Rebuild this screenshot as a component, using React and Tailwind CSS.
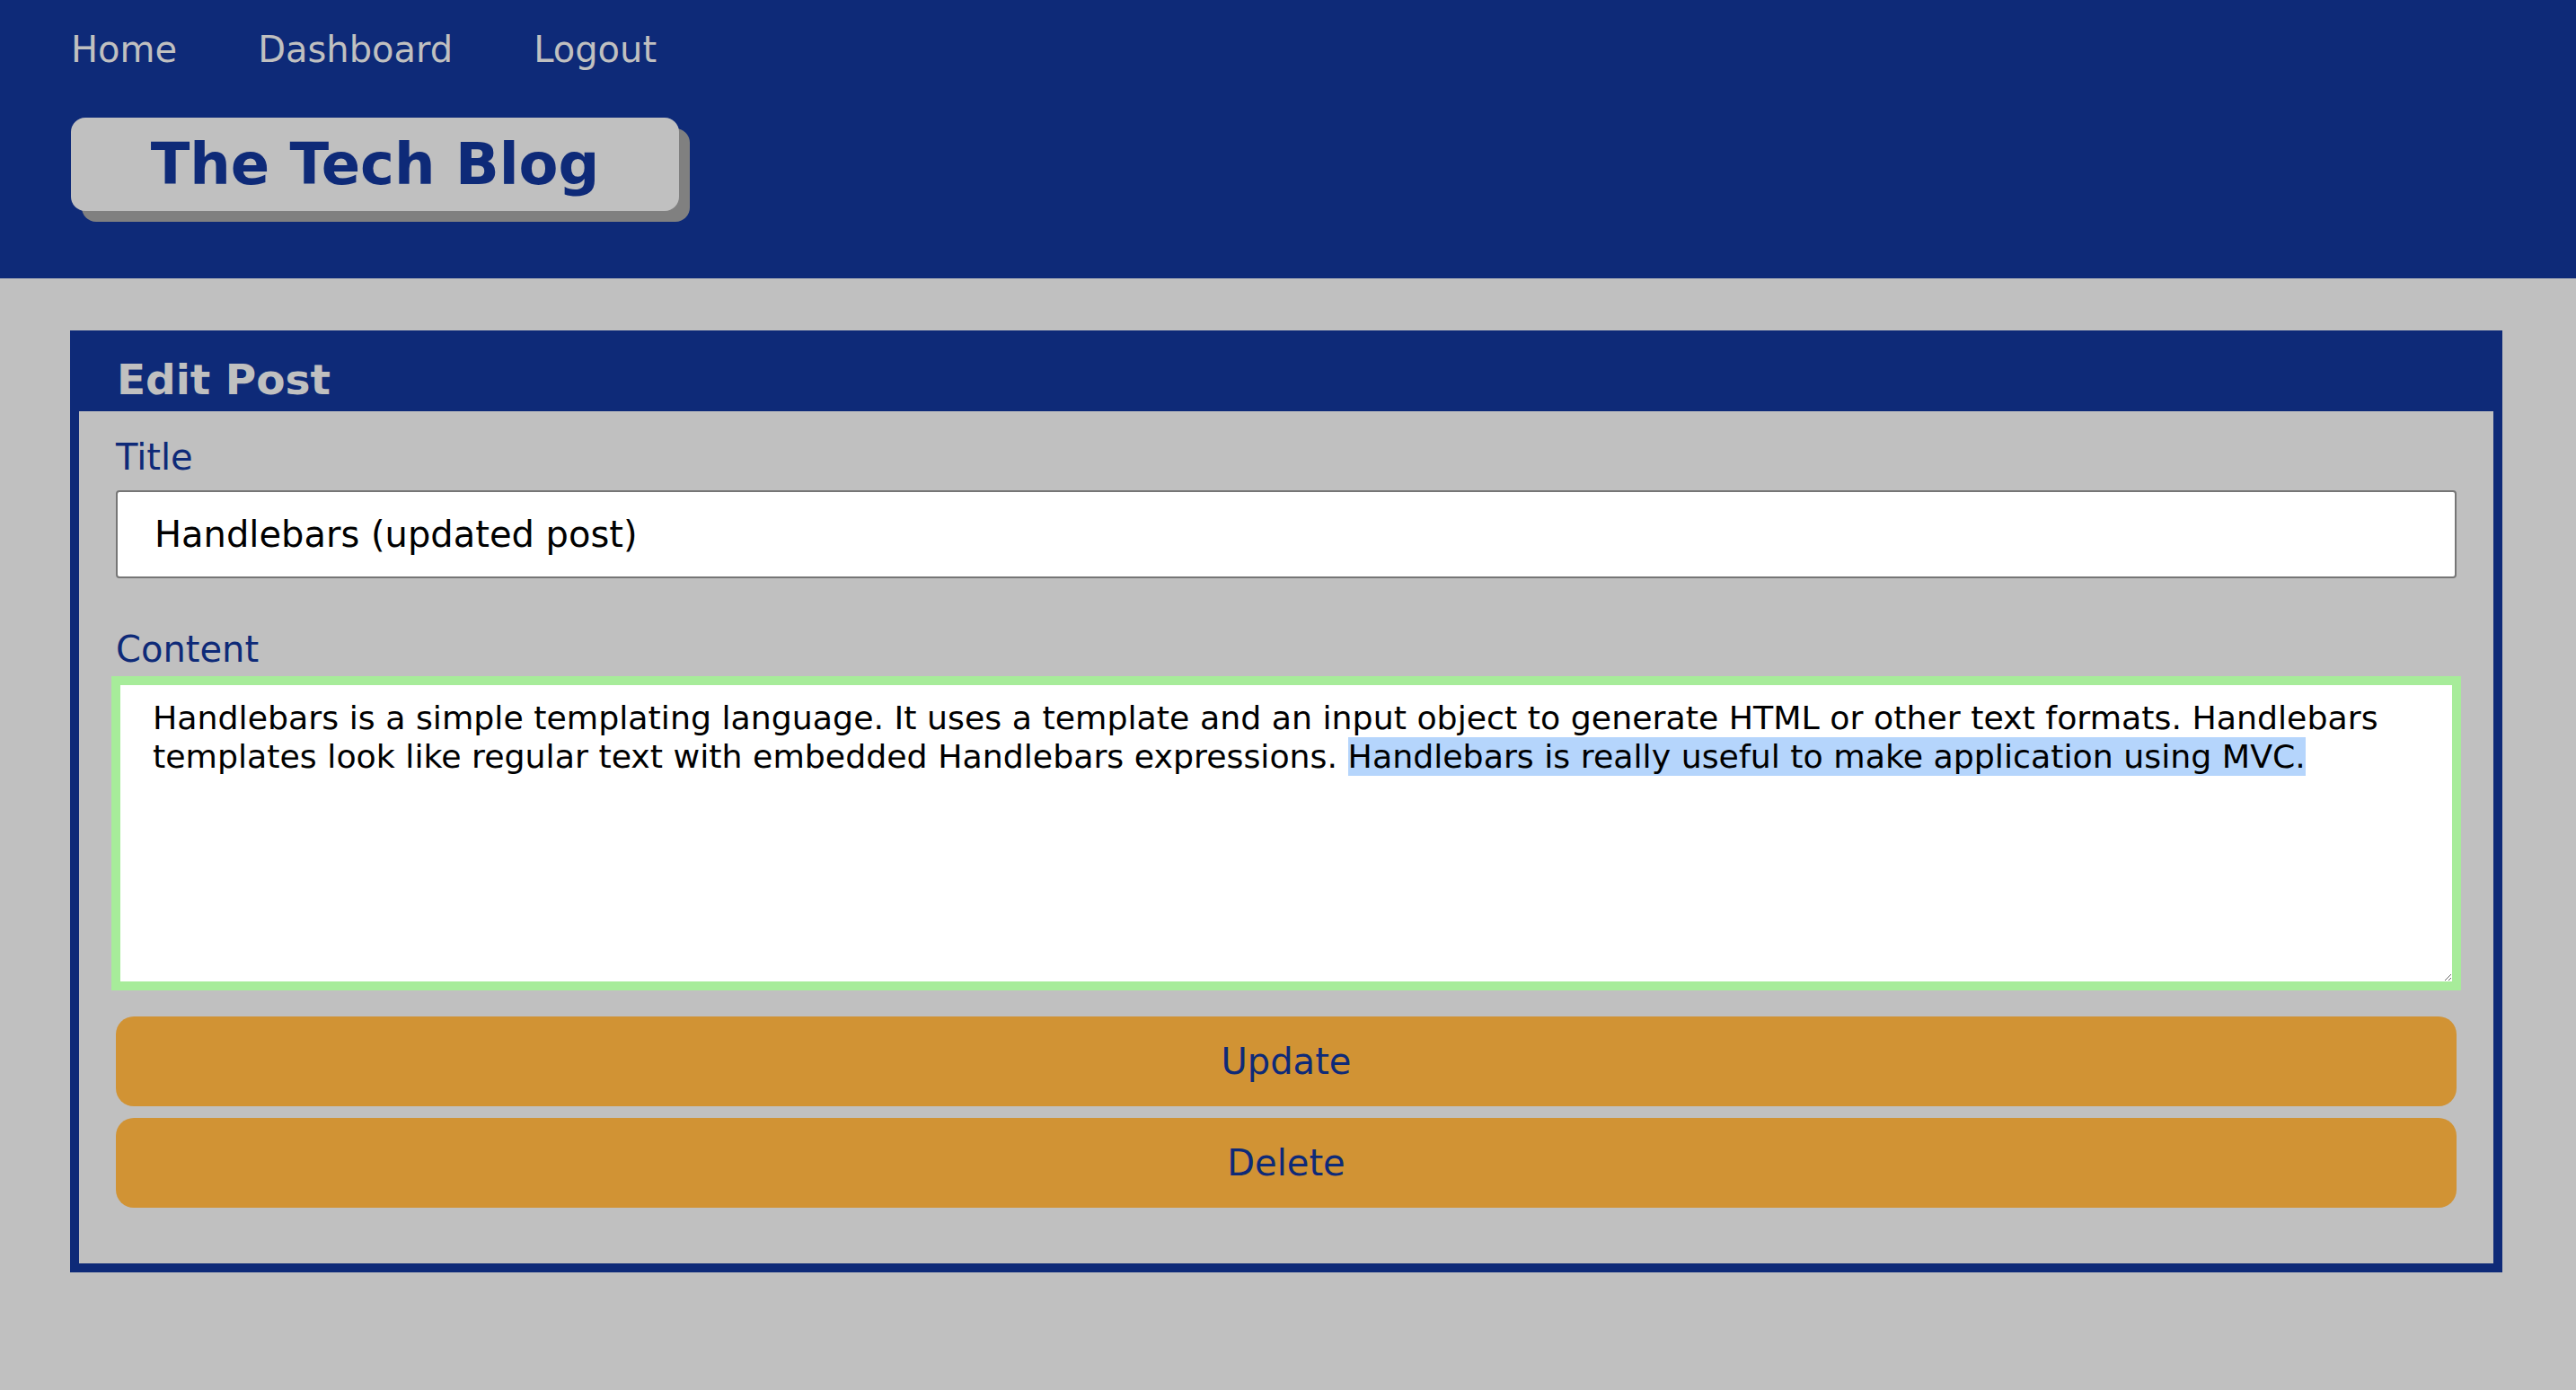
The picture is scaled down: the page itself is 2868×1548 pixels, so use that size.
import React from "react";

const navLinks = ["Home", "Dashboard", "Logout"];

export default function App() {
  return (
    <div className="min-h-screen bg-[#c0c0c0] font-['DejaVu_Sans',sans-serif]">
      {/* Header */}
      <header className="h-[310px] bg-[#0e2a78] pt-[32px] px-[79px]">
        <nav className="flex gap-[90px] text-[40px] text-[#c0c0c0]">
          {navLinks.map((link) => (
            <a key={link} href="#" className="leading-[46px]">
              {link}
            </a>
          ))}
        </nav>
        <div className="mt-[53px] flex h-[104px] w-[677px] items-center justify-center rounded-[16px] bg-[#c0c0c0] shadow-[12px_12px_0_#808080]">
          <h1 className="text-[64px] font-bold leading-none text-[#0e2a78]">
            The Tech Blog
          </h1>
        </div>
      </header>

      {/* Edit Post card */}
      <main className="ml-[78px] mr-[82px] mt-[58px] border-[10px] border-[#0e2a78] bg-[#0e2a78]">
        <h2 className="pl-[42px] pt-[17px] pb-[8px] text-[47px] font-bold leading-[55px] text-[#c0c0c0]">
          Edit Post
        </h2>
        <div className="bg-[#c0c0c0] pl-[41px] pr-[41px] pt-[28px] pb-[62px]">
          <label className="block text-[40px] leading-[46px] text-[#0e2a78]">
            Title
          </label>
          <div className="mt-[14px] flex h-[98px] items-center rounded-[4px] border-2 border-[#767676] bg-white pl-[41px] text-[40px] text-black">
            Handlebars (updated post)
          </div>

          <label className="mt-[56px] block text-[40px] leading-[46px] text-[#0e2a78]">
            Content
          </label>
          <div className="mt-[12px] h-[340px] resize overflow-auto border-[5px] border-[#a7ec9a] bg-white px-[36px] pt-[15px] text-[36.3px] leading-[43px] text-black outline-5 outline-solid outline-[#a7ec9a]">
            Handlebars is a simple templating language. It uses a template and an input object to generate HTML or other text formats. Handlebars templates look like regular text with embedded Handlebars expressions.{" "}
            <span className="bg-[#b5d5fc]">
              Handlebars is really useful to make application using MVC.
            </span>
          </div>

          <button className="mt-[34px] flex h-[100px] w-full items-center justify-center rounded-[20px] bg-[#d19334] text-[40px] text-[#0e2a78]">
            Update
          </button>
          <button className="mt-[13px] flex h-[100px] w-full items-center justify-center rounded-[20px] bg-[#d19334] text-[40px] text-[#0e2a78]">
            Delete
          </button>
        </div>
      </main>
    </div>
  );
}
